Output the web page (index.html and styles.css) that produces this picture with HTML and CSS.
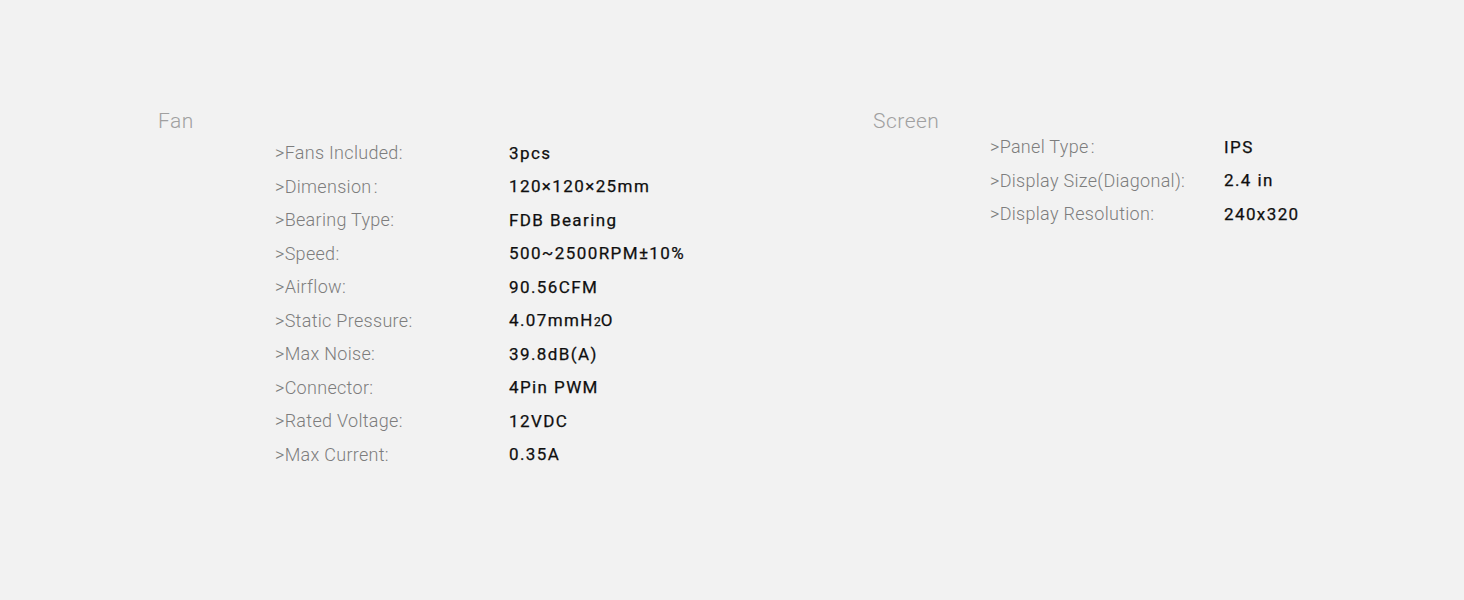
FILE: index.html
```html
<!DOCTYPE html>
<html lang="en">
<head>
<meta charset="utf-8">
<title>Specifications</title>
<link rel="stylesheet" href="styles.css">
</head>
<body>
<main class="specs">
  <section class="group group-fan">
    <h2 class="group-title">Fan</h2>
    <dl class="rows">
      <div class="row"><dt>&gt;Fans Included:</dt><dd>3pcs</dd></div>
      <div class="row"><dt>&gt;Dimension&#8202;:</dt><dd>120×120×25mm</dd></div>
      <div class="row"><dt>&gt;Bearing Type:</dt><dd>FDB Bearing</dd></div>
      <div class="row"><dt>&gt;Speed:</dt><dd>500~2500RPM±10%</dd></div>
      <div class="row"><dt>&gt;Airflow:</dt><dd>90.56CFM</dd></div>
      <div class="row"><dt>&gt;Static Pressure:</dt><dd>4.07mmH<span class="sub">2</span>O</dd></div>
      <div class="row"><dt>&gt;Max Noise:</dt><dd>39.8dB(A)</dd></div>
      <div class="row"><dt>&gt;Connector:</dt><dd>4Pin PWM</dd></div>
      <div class="row"><dt>&gt;Rated Voltage:</dt><dd>12VDC</dd></div>
      <div class="row"><dt>&gt;Max Current:</dt><dd>0.35A</dd></div>
    </dl>
  </section>
  <section class="group group-screen">
    <h2 class="group-title">Screen</h2>
    <dl class="rows">
      <div class="row"><dt>&gt;Panel Type&#8202;:</dt><dd>IPS</dd></div>
      <div class="row"><dt>&gt;Display Size(Diagonal):</dt><dd>2.4 in</dd></div>
      <div class="row"><dt>&gt;Display Resolution:</dt><dd>240x320</dd></div>
    </dl>
  </section>
</main>
</body>
</html>
```
FILE: styles.css
```css
html, body {
  margin: 0;
  padding: 0;
  background: #f2f2f2;
}
body {
  width: 1464px;
  height: 600px;
  overflow: hidden;
  font-family: Roboto, "Liberation Sans", sans-serif;
}
.specs {
  display: flex;
  padding: 107px 0 0 158px;
}
.group {
  flex: 0 0 auto;
}
.group-fan {
  width: 715px;
}
.group-title {
  margin: 0;
  font-size: 21px;
  line-height: 28px;
  font-weight: 300;
  color: #a0a0a0;
  letter-spacing: 0.5px;
}
.rows {
  margin: 1px 0 0 117px;
  padding: 0;
}
.group-screen .rows {
  margin-top: -5px;
}
.row {
  display: flex;
  height: 33.5px;
  align-items: center;
}
.row dt {
  width: 234px;
  font-size: 18px;
  font-weight: 300;
  color: #7d7d7d;
  letter-spacing: 0.3px;
}
.row dd {
  margin: 0;
  font-size: 17px;
  font-weight: 400;
  color: #0f0f0f;
  letter-spacing: 1.4px;
  -webkit-text-stroke: 0.25px #0f0f0f;
}
.sub {
  font-size: 12px;
  letter-spacing: 0;
}
```
